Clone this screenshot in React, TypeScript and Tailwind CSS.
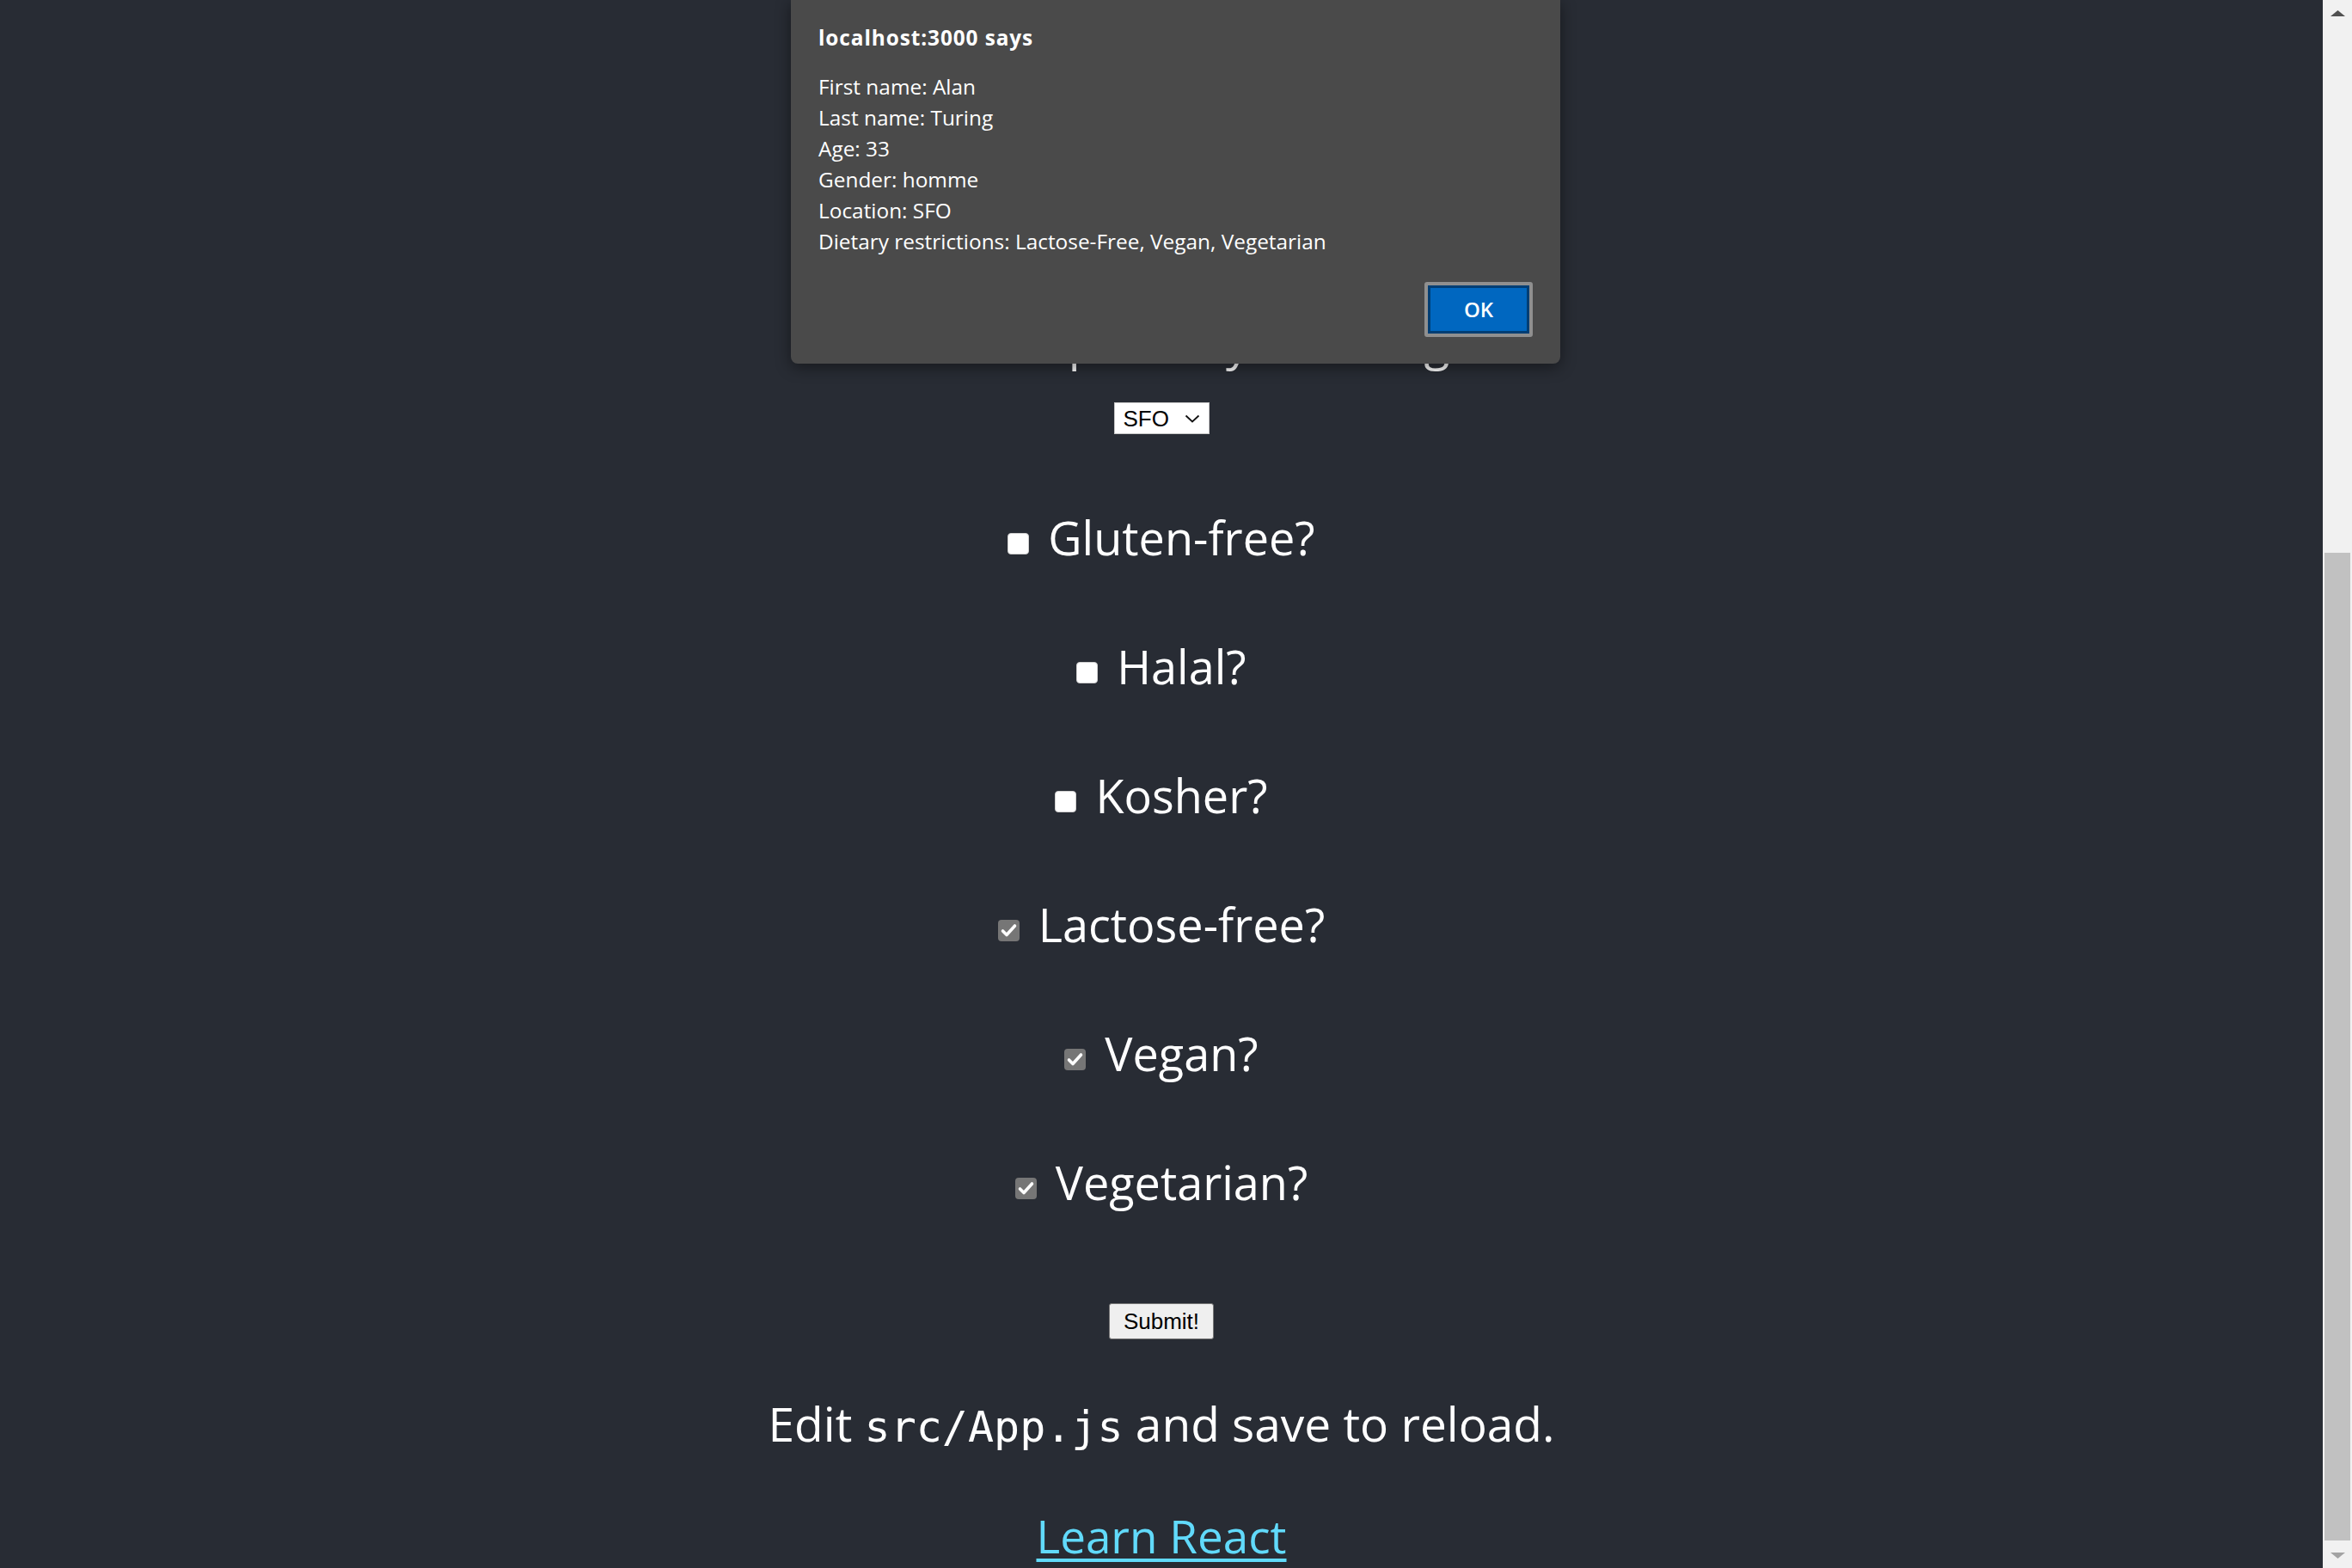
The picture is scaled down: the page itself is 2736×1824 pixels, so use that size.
import React from 'react'

const options = [
  { label: 'Gluten-free?', checked: false },
  { label: 'Halal?', checked: false },
  { label: 'Kosher?', checked: false },
  { label: 'Lactose-free?', checked: true },
  { label: 'Vegan?', checked: true },
  { label: 'Vegetarian?', checked: true },
]

const alertLines = [
  'First name: Alan',
  'Last name: Turing',
  'Age: 33',
  'Gender: homme',
  'Location: SFO',
  'Dietary restrictions: Lactose-Free, Vegan, Vegetarian',
]

function Box({ checked }: { checked: boolean }) {
  return (
    <span
      className={
        'relative inline-block w-[25px] h-[25px] mb-[1px] mr-[22px] rounded-[4px] ' +
        (checked ? 'bg-[#767676]' : 'bg-white border border-[#d0d0d0]')
      }
    >
      {checked && (
        <svg className="absolute inset-0" width="25" height="25" viewBox="0 0 25 25">
          <path d="M5.5 13 L10 17.5 L19.5 7" fill="none" stroke="white" strokeWidth="3.6" strokeLinecap="round" strokeLinejoin="round" />
        </svg>
      )}
    </span>
  )
}

function Scrollbar() {
  return (
    <div className="w-[34px] h-full flex flex-col bg-[#f1f1f1]">
      <div className="h-[30px] flex items-center justify-center">
        <svg width="17" height="7" viewBox="0 0 17 7">
          <polygon points="8.5,0 17,7 0,7" fill="#505050" />
        </svg>
      </div>
      <div className="flex-1" />
      <div className="h-[1149px] mx-[2px] mb-[2px] bg-[#c1c1c1]" />
      <div className="h-[30px] flex items-center justify-center">
        <svg width="17" height="7" viewBox="0 0 17 7">
          <polygon points="0,0 17,0 8.5,7" fill="#a3a3a3" />
        </svg>
      </div>
    </div>
  )
}

export default function App() {
  return (
    <div className="relative flex h-screen w-full overflow-hidden bg-[#282c34] font-['Open_Sans',sans-serif]">
      <main className="flex-1 h-full flex flex-col items-center justify-end text-white text-[55px] leading-[75px] text-center">
        <h2 className="h-[75px] whitespace-nowrap">Choose a place by the wing?</h2>

        <div className="mt-[33px] w-[111px] h-[37px] flex items-center justify-between pl-[10px] pr-[10px] bg-white border border-[#c8c8c8] text-black text-[26px] leading-none font-['Liberation_Sans',Arial,sans-serif]">
          <span>SFO</span>
          <svg width="18" height="10" viewBox="0 0 18 10">
            <path d="M1.5 1.5 L9 8.5 L16.5 1.5" fill="none" stroke="#111" strokeWidth="1.8" />
          </svg>
        </div>

        <div className="mt-[83px] flex flex-col gap-[75px] text-[54px]">
          {options.map((o) => (
            <div key={o.label} className="h-[75px] whitespace-nowrap">
              <label>
                <Box checked={o.checked} />
                {o.label}
              </label>
            </div>
          ))}
        </div>

        <button className="mt-[103px] w-[122px] h-[42px] bg-[#efefef] border border-[#767676] rounded-[3px] text-black text-[26px] leading-none font-['Liberation_Sans',Arial,sans-serif]">
          Submit!
        </button>

        <p className="mt-[60px] h-[75px] whitespace-nowrap">
          Edit <code className="font-['DejaVu_Sans_Mono',monospace] text-[50px]">src/App.js</code> and save to reload.
        </p>

        <a href="#" className="mt-[56px] h-[75px] text-[53px] text-[#61dafb] underline decoration-[4px] underline-offset-[6px]">
          Learn React
        </a>
      </main>

      <Scrollbar />

      <div className="absolute left-[920px] top-0 w-[895px] h-[423px] bg-[#4a4a4a] rounded-b-[8px] shadow-[0_4px_18px_rgba(0,0,0,0.45)] px-[32px] text-white text-[24.4px] leading-[36px] flex flex-col">
        <div className="mt-[26px] font-bold tracking-[0.9px]">localhost:3000 says</div>
        <div className="mt-[21px] flex flex-col">
          {alertLines.map((l) => (
            <div key={l}>{l}</div>
          ))}
        </div>
        <div className="mt-[29px] flex justify-end">
          <div className="w-[126px] h-[64px] border-[4px] border-[#8f8f8f] rounded-[3px]">
            <div className="w-full h-full border-[3px] border-[#003e74] bg-[#0067c0] flex items-center justify-center text-[24px] font-semibold">
              OK
            </div>
          </div>
        </div>
      </div>
    </div>
  )
}
